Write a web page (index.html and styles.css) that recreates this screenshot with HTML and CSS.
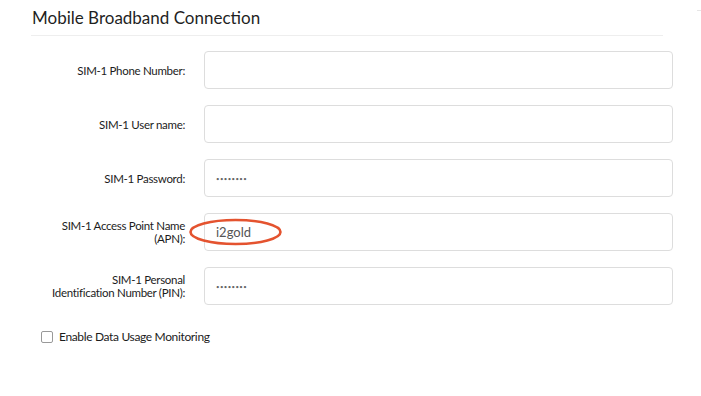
FILE: index.html
```html
<!DOCTYPE html>
<html lang="en">
    <head>
        <meta charset="UTF-8">
        <meta name="viewport" content="width=device-width, initial-scale=1.0">
        <title>Mobile Broadband Connection</title>
        <link rel="stylesheet" href="styles.css">
    </head>
    <body>
        <div class="panel">
            <h2 class="panel-title">Mobile Broadband Connection</h2>
            <form class="settings">
                <div class="row">
                    <label for="phone">SIM-1 Phone Number:</label>
                    <input type="text" id="phone" class="field">
                </div>
                <div class="row">
                    <label for="user">SIM-1 User name:</label>
                    <input type="text" id="user" class="field">
                </div>
                <div class="row">
                    <label for="pass">SIM-1 Password:</label>
                    <input type="password" id="pass" class="field secret" value="abcdefgh">
                </div>
                <div class="row">
                    <label for="apn">SIM-1 Access Point Name<br>(APN):</label>
                    <div class="mark">
                        <input type="text" id="apn" class="field" value="i2gold">
                        <!-- red annotation ring round the value -->
                        <svg class="ring" width="96" height="30" viewBox="0 0 96 30">
                            <ellipse cx="47.5" cy="15" rx="45" ry="12" fill="none" stroke="#e4532f" stroke-width="2.6"/>
                        </svg>
                    </div>
                </div>
                <div class="row">
                    <label for="pin">SIM-1 Personal<br>Identification Number (PIN):</label>
                    <input type="password" id="pin" class="field secret" value="abcdefgh">
                </div>
                <label class="check">
                    <input type="checkbox" class="box">
                    <span>Enable Data Usage Monitoring</span>
                </label>
            </form>
        </div>
        <div class="corner"></div>
    </body>
</html>
```

FILE: styles.css
```css
*{
    box-sizing: border-box;
}
body{
    margin: 0;
    background-color: white;
    font-family: Lato, "Open Sans", sans-serif;
    color: #222;
}
.panel{
    padding: 0 0 0 31px;
}
.panel-title{
    width: 632px;
    margin: 0;
    padding: 7px 0 7px 1px;
    font-size: 17px;
    font-weight: 400;
    line-height: 21px;
    color: #1f1f1f;
    border-bottom: 1px solid #eeeeee;
}
.settings{
    margin-top: 15px;
}
.row{
    display: grid;
    grid-template-columns: 154px 469px;
    column-gap: 19px;
    align-items: center;
    margin-bottom: 16px;
}
.row label{
    text-align: right;
    font-size: 11.5px;
    letter-spacing: -0.3px;
    line-height: 13px;
    color: #1c1c1c;
}
.field{
    width: 469px;
    height: 38px;
    border: 1px solid #dddddd;
    border-radius: 4px;
    padding: 0 11px;
    font-family: Lato, "Open Sans", sans-serif;
    font-size: 13px;
    color: #555;
    background-color: white;
    outline: none;
}
.secret{
    font-size: 6px;
    letter-spacing: 0.4px;
    color: #666;
}
.mark{
    position: relative;
}
.ring{
    position: absolute;
    left: -16px;
    top: 4px;
}
.check{
    display: flex;
    align-items: center;
    gap: 6px;
    margin: 24px 0 0 10px;
    font-size: 12px;
    letter-spacing: -0.35px;
    color: #1c1c1c;
}
.box{
    appearance: none;
    width: 12px;
    height: 12px;
    margin: 0;
    border: 1px solid #999;
    border-radius: 2px;
    background-color: white;
}
.corner{
    position: absolute;
    top: 10px;
    left: 697px;
    width: 4px;
    height: 1px;
    background-color: #e6e6e6;
}
```
